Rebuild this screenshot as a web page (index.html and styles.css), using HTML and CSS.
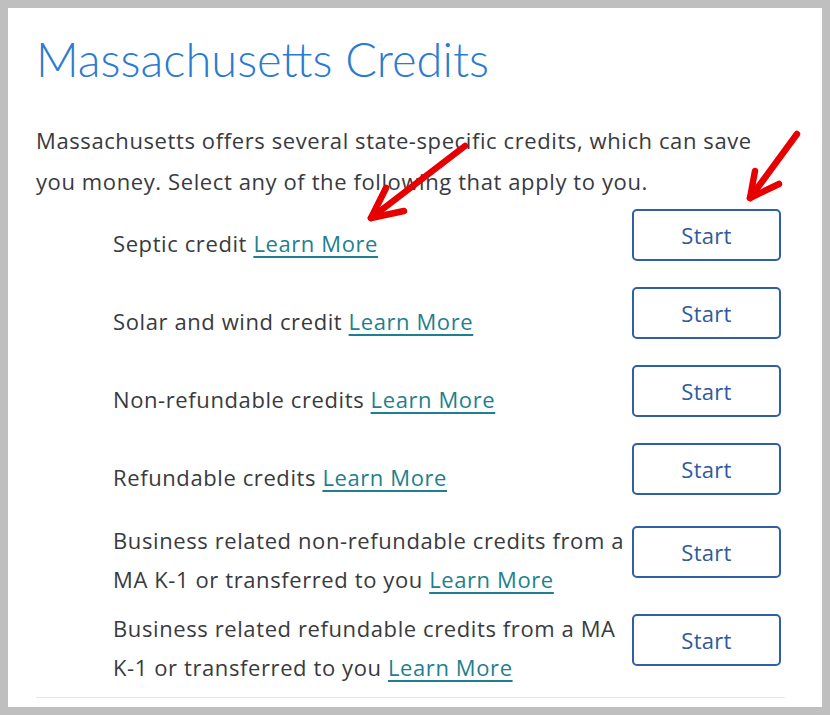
FILE: index.html
```html
<!DOCTYPE html>
<html lang="en">
<head>
    <meta charset="UTF-8">
    <meta name="viewport" content="width=device-width, initial-scale=1.0">
    <title>Massachusetts Credits</title>
    <link rel="stylesheet" href="styles.css">
</head>
<body>

    <div class="panel">
        <h1>Massachusetts Credits</h1>
        <p class="intro">Massachusetts offers several state-specific credits, which can save you money. Select any of the following that apply to you.</p>

        <div class="credits">
            <div class="credit-row">
                <div class="credit-text">Septic credit <a href="#">Learn More</a></div>
                <button class="start-btn">Start</button>
            </div>
            <div class="credit-row">
                <div class="credit-text">Solar and wind credit <a href="#">Learn More</a></div>
                <button class="start-btn">Start</button>
            </div>
            <div class="credit-row">
                <div class="credit-text">Non-refundable credits <a href="#">Learn More</a></div>
                <button class="start-btn">Start</button>
            </div>
            <div class="credit-row">
                <div class="credit-text">Refundable credits <a href="#">Learn More</a></div>
                <button class="start-btn">Start</button>
            </div>
            <div class="credit-row">
                <div class="credit-text">Business related non-refundable credits from a MA K-1 or transferred to you <a href="#">Learn More</a></div>
                <button class="start-btn">Start</button>
            </div>
            <div class="credit-row">
                <div class="credit-text">Business related refundable credits from a MA K-1 or transferred to you <a href="#">Learn More</a></div>
                <button class="start-btn">Start</button>
            </div>
        </div>

        <div class="divider"></div>
    </div>

    <!-- red annotation arrows drawn on top of the screenshot -->
    <svg class="arrows" width="830" height="715" viewBox="0 0 830 715">
        <g fill="none" stroke="#e60000" stroke-width="6.5" stroke-linecap="round" stroke-linejoin="round">
            <path d="M465 146 L371 218"/>
            <path d="M386 188 L371 218 L404 211"/>
            <path d="M797 134 L750 198"/>
            <path d="M755 171 L750 198 L779 184"/>
        </g>
    </svg>

</body>
</html>
```

FILE: styles.css
```css
* { margin: 0; padding: 0; box-sizing: border-box; }
body { background: #bfbfbf; padding: 8px; font-family: 'Open Sans', 'Lato', sans-serif; color: #393a3d; position: relative; }
.panel { background: white; height: 699px; padding: 0 37px 0 28px; overflow: hidden; }
h1 { font-family: 'Lato', sans-serif; font-size: 47px; font-weight: 300; color: #2b7bcf; line-height: 56px; padding-top: 23px; }
.intro { font-size: 22px; letter-spacing: 0.6px; line-height: 41px; margin-top: 33px; }
.credits { padding-left: 77px; margin-top: 7px; }
.credit-row { display: flex; align-items: center; gap: 5px; margin-bottom: 10px; }
.credit-text { flex: 1; font-size: 22px; letter-spacing: 0.6px; line-height: 39px; }
.credit-text a { color: #1e7f8e; text-decoration: underline; text-decoration-thickness: 2px; text-underline-offset: 4px; }
.start-btn { width: 149px; height: 52px; flex-shrink: 0; margin: 0 4px 16px 0; background: white; border: 2px solid #2f5fa5; border-radius: 5px; color: #2e5b9c; font-family: inherit; font-size: 22px; letter-spacing: 0.3px; cursor: pointer; }
.divider { height: 1px; background: #e6e6e6; margin: 3px 0 0 0; }
.arrows { position: absolute; top: 0; left: 0; pointer-events: none; }
```
